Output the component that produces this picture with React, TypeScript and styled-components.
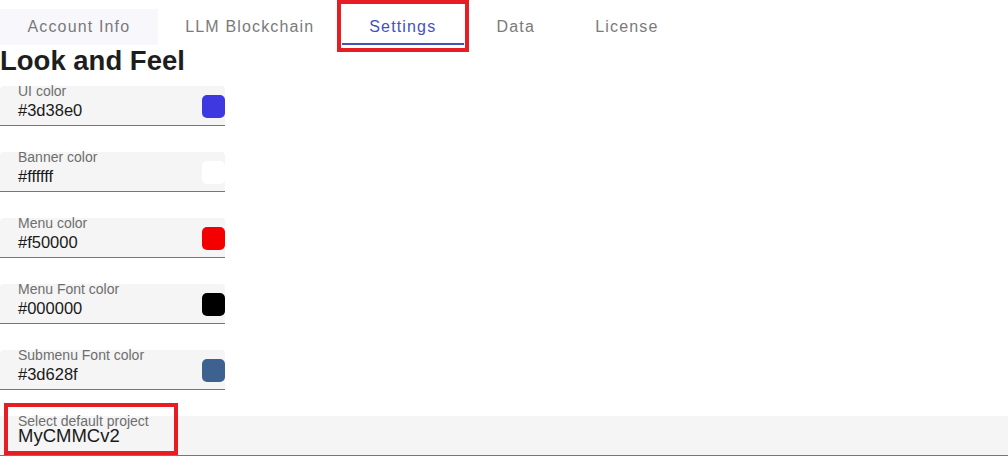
import React from "react";
import styled, { createGlobalStyle, css } from "styled-components";

const GlobalStyle = createGlobalStyle`
  html, body {
    margin: 0;
    padding: 0;
    background: #ffffff;
    font-family: "Liberation Sans", Arial, sans-serif;
  }
`;

const Page = styled.div`
  width: 1008px;
  height: 458px;
  overflow: hidden;
  display: flex;
  flex-direction: column;
`;

const TabBar = styled.nav`
  display: flex;
  margin-top: 9px;
  height: 36px;
`;

const highlight = css`
  &::after {
    content: "";
    position: absolute;
    border: 4px solid #e61d23;
    pointer-events: none;
  }
`;

const Tab = styled.div<{ $active?: boolean; $shaded?: boolean; $marked?: boolean }>`
  position: relative;
  box-sizing: border-box;
  height: 36px;
  min-width: 104px;
  padding: 0 27.5px;
  display: flex;
  align-items: center;
  justify-content: center;
  font-size: 16px;
  letter-spacing: 1.15px;
  color: ${(p) => (p.$active ? "#4351bd" : "#7a7a7a")};
  background: ${(p) => (p.$shaded ? "#f7f7fc" : "transparent")};
  box-shadow: ${(p) => (p.$active ? "inset 0 -2px 0 #4351bd" : "none")};
  ${(p) =>
    p.$marked &&
    css`
      ${highlight}
      &::after {
        top: -9px;
        bottom: -7px;
        left: -5px;
        right: -5px;
      }
    `}
`;

const Heading = styled.h1`
  margin: 0 0 9px 0;
  font-size: 27.5px;
  line-height: 32px;
  font-weight: 700;
  color: #1e1e1e;
`;

const FieldList = styled.div`
  display: flex;
  flex-direction: column;
  gap: 26px;
`;

const Field = styled.div<{ $wide?: boolean; $marked?: boolean }>`
  position: relative;
  box-sizing: border-box;
  width: ${(p) => (p.$wide ? "1008px" : "225px")};
  height: 40px;
  padding-left: 18px;
  background: #f5f5f5;
  border-bottom: 1px solid #767676;
  border-radius: ${(p) => (p.$wide ? "0" : "4px 4px 0 0")};
  display: flex;
  align-items: flex-start;
  justify-content: space-between;
  ${(p) =>
    p.$marked &&
    css`
      ${highlight}
      &::after {
        top: -13px;
        left: 4px;
        width: 174px;
        height: 52px;
        box-sizing: border-box;
      }
    `}
`;

const FieldText = styled.div`
  display: flex;
  flex-direction: column;
`;

const Label = styled.div`
  font-size: 14px;
  line-height: 11px;
  color: #6e6e6e;
  white-space: nowrap;
`;

const Value = styled.div<{ $large?: boolean }>`
  margin-top: ${(p) => (p.$large ? "0" : "4px")};
  font-size: ${(p) => (p.$large ? "18.5px" : "16.5px")};
  line-height: ${(p) => (p.$large ? "17px" : "19px")};
  color: #1a1a1a;
`;

const Swatch = styled.div<{ $color: string }>`
  width: 23px;
  height: 23px;
  margin-top: 9px;
  border-radius: 5px;
  background: ${(p) => p.$color};
`;

const colors = [
  { label: "UI color", value: "#3d38e0" },
  { label: "Banner color", value: "#ffffff" },
  { label: "Menu color", value: "#f50000" },
  { label: "Menu Font color", value: "#000000" },
  { label: "Submenu Font color", value: "#3d628f" },
];

export default function App() {
  return (
    <Page>
      <GlobalStyle />
      <TabBar>
        <Tab $shaded>Account Info</Tab>
        <Tab>LLM Blockchain</Tab>
        <Tab $active $marked>
          Settings
        </Tab>
        <Tab>Data</Tab>
        <Tab>License</Tab>
      </TabBar>
      <Heading>Look and Feel</Heading>
      <FieldList>
        {colors.map((c) => (
          <Field key={c.label}>
            <FieldText>
              <Label>{c.label}</Label>
              <Value>{c.value}</Value>
            </FieldText>
            <Swatch $color={c.value} />
          </Field>
        ))}
        <Field $wide $marked>
          <FieldText>
            <Label>Select default project</Label>
            <Value $large>MyCMMCv2</Value>
          </FieldText>
        </Field>
      </FieldList>
    </Page>
  );
}
